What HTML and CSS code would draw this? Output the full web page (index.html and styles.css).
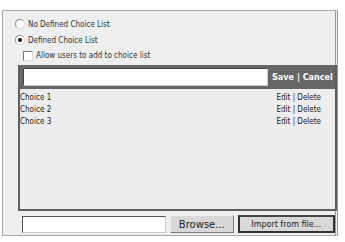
FILE: index.html
```html
<!DOCTYPE html>
<html lang="en">
<head>
<meta charset="UTF-8">
<title>Choice List</title>
<link rel="stylesheet" href="styles.css">
</head>
<body>

<div class="frame">
    <label class="opt"><span class="radio"></span>No Defined Choice List</label>
    <label class="opt"><span class="radio on"></span>Defined Choice List</label>
    <label class="opt sub"><span class="check"></span>Allow users to add to choice list</label>

    <div class="panel">
        <div class="bar">
            <input class="field" type="text">
            <span class="actions">Save | Cancel</span>
        </div>
        <ul class="choices">
            <li><span>Choice 1</span><span>Edit | Delete</span></li>
            <li><span>Choice 2</span><span>Edit | Delete</span></li>
            <li><span>Choice 3</span><span>Edit | Delete</span></li>
        </ul>
    </div>

    <div class="import">
        <input class="file" type="text">
        <button class="btn browse">Browse...</button>
        <button class="btn primary">Import from file...</button>
    </div>
</div>

</body>
</html>
```

FILE: styles.css
```css
/* --- Page --- */
body {
    margin:0;
    background:#fff;
    font-family:"DejaVu Sans Condensed", "DejaVu Sans", sans-serif;
    font-size:8px;
    color:#222;
}

.frame {
    margin:10px 0 0 2px;
    width:336px;
    height:226px;
    border:1px solid #a8a8a8;
    border-right:3px double #9a9a9a;
    background:#efefef;
    padding:5px 0 0 0;
    box-sizing:border-box;
    display:flex;
    flex-direction:column;
}

/* --- Radios / checkbox --- */
.opt {
    display:flex;
    align-items:center;
    gap:3px;
    height:16px;
    padding-left:12px;
    color:#333;
}
.opt.sub { padding-left:20px; height:15px; }

.radio {
    width:8px;
    height:8px;
    border-radius:50%;
    border:1px solid #8a8a8a;
    border-right-color:#d8d8d8;
    border-bottom-color:#d8d8d8;
    background:#fff;
    position:relative;
}
.radio.on::after {
    content:"";
    position:absolute;
    left:2px;
    top:2px;
    width:4px;
    height:4px;
    border-radius:50%;
    background:#111;
}
.check {
    width:8px;
    height:8px;
    border:1px solid #777;
    border-right-color:#ddd;
    border-bottom-color:#ddd;
    background:#fff;
}

/* --- Panel with choices --- */
.panel {
    margin:2px 0 0 15px;
    width:319px;
    height:146px;
    border:2px solid #5e5e5e;
    border-top:0;
    box-sizing:border-box;
    background:#ededed;
}
.bar {
    display:flex;
    align-items:center;
    height:24px;
    background:#666;
    padding:0 2px 0 3px;
    gap:4px;
}
.field {
    width:245px;
    height:18px;
    box-sizing:border-box;
    border:1px solid #444;
    border-right-color:#ccc;
    border-bottom-color:#ccc;
    background:#fff;
    margin:0;
    padding:0;
}
.actions {
    color:#fff;
    font-weight:bold;
    font-size:9px;
    white-space:nowrap;
}
.choices {
    list-style:none;
    margin:3px 0 0 0;
    padding:0;
}
.choices li {
    display:flex;
    justify-content:space-between;
    height:12px;
    line-height:12px;
    padding:0 14px 0 0;
    color:#222;
}

/* --- Import row --- */
.import {
    display:flex;
    align-items:center;
    gap:4px;
    margin:4px 0 0 19px;
}
.file {
    width:144px;
    height:17px;
    box-sizing:border-box;
    border:1px solid #555;
    border-right-color:#ccc;
    border-bottom-color:#ccc;
    background:#fff;
    margin:0;
}
.btn {
    height:18px;
    margin:0;
    padding:0;
    background:#d8d8d8;
    border:1px solid #eee;
    border-right-color:#777;
    border-bottom-color:#777;
    font-family:"DejaVu Sans", sans-serif;
    color:#222;
}
.browse { width:64px; font-size:10px; }
.primary {
    width:98px;
    font-size:8px;
    border:2px solid #333;
    border-top-color:#444;
}
```
